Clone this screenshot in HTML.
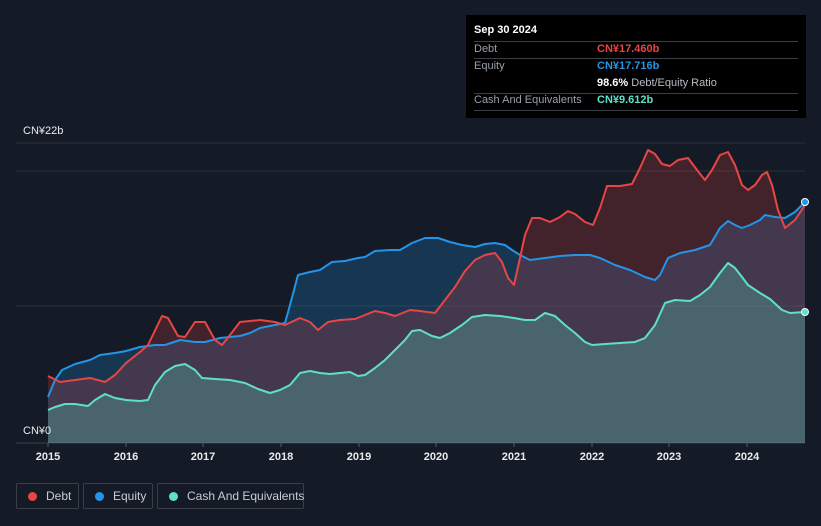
<!DOCTYPE html>
<html><head><meta charset="utf-8"><style>
body{margin:0;background:#151b26;width:821px;height:526px;overflow:hidden;font-family:"Liberation Sans",sans-serif;position:relative}
.tt{position:absolute;left:466px;top:15px;width:340px;height:103px;background:#000;color:#fff;font-size:11px}
.tt .r{position:absolute;left:8px;width:324px;border-top:1px solid #3a3f47}
.lab{position:absolute;left:8px;color:#9aa0a8}
.val{position:absolute;left:131px;font-weight:bold;white-space:nowrap}
.leg{position:absolute;top:483px;height:26px;border:1px solid #3a3f47;border-radius:2px;color:#c8ccd2;font-size:12px;line-height:24px;box-sizing:border-box;white-space:nowrap}
.leg i{display:inline-block;width:9px;height:9px;border-radius:50%;margin:0 9px 0 11px;vertical-align:-1px}
.ax{position:absolute;top:451px;color:#e8eaed;font-size:11px;font-weight:bold;width:40px;text-align:center}
</style></head><body>
<svg width="821" height="526" style="position:absolute;left:0;top:0">
<line x1="16" y1="143" x2="805" y2="143" stroke="#2a303b"/>
<line x1="16" y1="171" x2="805" y2="171" stroke="#2a303b"/>
<line x1="16" y1="306" x2="805" y2="306" stroke="#2a303b"/>
<line x1="16" y1="443" x2="805" y2="443" stroke="#3a404b"/>
<path fill="rgba(33,150,243,0.22)" d="M48,397 L55,380 62,370 75,364 90,360 100,355 115,353 126,351 140,347 155,345 165,345 180,340 195,342 205,342 220,338 240,336 250,333 260,328 275,325 285,323 290,305 298,275 310,272 320,270 332,262 345,261 358,258 365,257 375,251 390,250 400,250 412,243 425,238 438,238 450,242 462,245 475,247 485,244 495,243 505,245 512,250 520,255 530,260 545,258 560,256 575,255 590,255 600,258 615,265 630,270 645,277 655,280 660,275 668,258 680,253 695,250 710,245 720,228 728,221 735,225 742,228 750,225 760,220 765,215 775,217 785,218 795,212 805,202 L805,443 L48,443Z"/>
<path fill="rgba(231,65,65,0.22)" d="M48,376 L60,382 75,380 90,378 105,382 115,375 126,363 140,352 148,345 162,316 168,318 178,336 185,337 195,322 205,322 215,340 222,345 230,335 240,322 260,320 275,322 285,325 300,318 310,322 318,330 328,322 340,320 355,319 365,315 375,311 385,313 395,316 410,310 420,311 435,313 445,300 455,287 465,271 475,260 485,255 495,253 502,262 508,278 514,285 520,258 525,235 532,218 540,218 550,222 560,217 568,211 575,214 585,222 593,225 600,208 607,186 620,186 632,184 640,168 648,150 655,154 662,164 670,166 678,160 688,158 697,170 705,180 712,170 720,155 728,152 735,165 742,185 748,190 755,185 762,175 767,172 772,185 778,210 785,228 795,220 805,205 L805,443 L48,443Z"/>
<path fill="rgba(88,214,190,0.28)" d="M48,410 L55,407 65,404 75,404 88,406 95,400 105,394 115,398 126,400 140,401 148,400 155,385 165,372 175,366 185,364 195,370 202,378 215,379 230,380 245,383 258,389 270,393 280,390 290,385 300,373 310,371 320,373 330,374 340,373 350,372 358,376 365,375 375,368 385,360 395,350 405,340 412,331 420,330 432,336 440,338 450,333 462,325 472,317 485,315 500,316 514,318 525,320 535,320 545,313 555,316 565,325 575,333 585,342 592,345 605,344 620,343 635,342 645,338 655,325 665,303 675,300 690,301 700,295 710,287 720,273 728,263 735,268 742,277 748,285 760,293 770,299 782,310 790,313 805,312 L805,443 L48,443Z"/>
<g fill="none" stroke-width="2" stroke-linejoin="round">
<path stroke="#2394e8" d="M48,397 L55,380 62,370 75,364 90,360 100,355 115,353 126,351 140,347 155,345 165,345 180,340 195,342 205,342 220,338 240,336 250,333 260,328 275,325 285,323 290,305 298,275 310,272 320,270 332,262 345,261 358,258 365,257 375,251 390,250 400,250 412,243 425,238 438,238 450,242 462,245 475,247 485,244 495,243 505,245 512,250 520,255 530,260 545,258 560,256 575,255 590,255 600,258 615,265 630,270 645,277 655,280 660,275 668,258 680,253 695,250 710,245 720,228 728,221 735,225 742,228 750,225 760,220 765,215 775,217 785,218 795,212 805,202"/>
<path stroke="#e84545" d="M48,376 L60,382 75,380 90,378 105,382 115,375 126,363 140,352 148,345 162,316 168,318 178,336 185,337 195,322 205,322 215,340 222,345 230,335 240,322 260,320 275,322 285,325 300,318 310,322 318,330 328,322 340,320 355,319 365,315 375,311 385,313 395,316 410,310 420,311 435,313 445,300 455,287 465,271 475,260 485,255 495,253 502,262 508,278 514,285 520,258 525,235 532,218 540,218 550,222 560,217 568,211 575,214 585,222 593,225 600,208 607,186 620,186 632,184 640,168 648,150 655,154 662,164 670,166 678,160 688,158 697,170 705,180 712,170 720,155 728,152 735,165 742,185 748,190 755,185 762,175 767,172 772,185 778,210 785,228 795,220 805,205"/>
<path stroke="#5ee0c8" d="M48,410 L55,407 65,404 75,404 88,406 95,400 105,394 115,398 126,400 140,401 148,400 155,385 165,372 175,366 185,364 195,370 202,378 215,379 230,380 245,383 258,389 270,393 280,390 290,385 300,373 310,371 320,373 330,374 340,373 350,372 358,376 365,375 375,368 385,360 395,350 405,340 412,331 420,330 432,336 440,338 450,333 462,325 472,317 485,315 500,316 514,318 525,320 535,320 545,313 555,316 565,325 575,333 585,342 592,345 605,344 620,343 635,342 645,338 655,325 665,303 675,300 690,301 700,295 710,287 720,273 728,263 735,268 742,277 748,285 760,293 770,299 782,310 790,313 805,312"/>
</g>
<circle cx="805" cy="202" r="3.5" fill="#2394e8" stroke="#fff" stroke-width="1"/>
<circle cx="805" cy="312" r="3.5" fill="#5ee0c8" stroke="#fff" stroke-width="1"/>
<g stroke="#555b66"><line x1="48" y1="443" x2="48" y2="447"/><line x1="126" y1="443" x2="126" y2="447"/><line x1="203" y1="443" x2="203" y2="447"/><line x1="281" y1="443" x2="281" y2="447"/><line x1="359" y1="443" x2="359" y2="447"/><line x1="436" y1="443" x2="436" y2="447"/><line x1="514" y1="443" x2="514" y2="447"/><line x1="592" y1="443" x2="592" y2="447"/><line x1="669" y1="443" x2="669" y2="447"/><line x1="747" y1="443" x2="747" y2="447"/></g>
</svg>
<div style="position:absolute;left:23px;top:125px;color:#e8eaed;font-size:11px">CN¥22b</div>
<div style="position:absolute;left:23px;top:425px;color:#e8eaed;font-size:11px">CN¥0</div>
<div class="ax" style="left:28px">2015</div><div class="ax" style="left:106px">2016</div><div class="ax" style="left:183px">2017</div><div class="ax" style="left:261px">2018</div><div class="ax" style="left:339px">2019</div><div class="ax" style="left:416px">2020</div><div class="ax" style="left:494px">2021</div><div class="ax" style="left:572px">2022</div><div class="ax" style="left:649px">2023</div><div class="ax" style="left:727px">2024</div>
<div class="tt">
<div style="position:absolute;left:8px;top:9px;font-weight:bold">Sep 30 2024</div>
<div class="r" style="top:26px"></div>
<div class="lab" style="top:28px">Debt</div><div class="val" style="top:28px;color:#e84545">CN¥17.460b</div>
<div class="r" style="top:43px"></div>
<div class="lab" style="top:45px">Equity</div><div class="val" style="top:45px;color:#2394e8">CN¥17.716b</div>
<div class="val" style="top:62px"><b>98.6%</b> <span style="font-weight:normal;color:#b8bdc4">Debt/Equity Ratio</span></div>
<div class="r" style="top:78px"></div>
<div class="lab" style="top:79px">Cash And Equivalents</div><div class="val" style="top:79px;color:#5ee0c8">CN¥9.612b</div>
<div class="r" style="top:95px"></div>
</div>
<div class="leg" style="left:16px;width:63px"><i style="background:#e84545"></i>Debt</div>
<div class="leg" style="left:83px;width:70px"><i style="background:#2394e8"></i>Equity</div>
<div class="leg" style="left:157px;width:147px"><i style="background:#5ee0c8"></i>Cash And Equivalents</div>
</body></html>
